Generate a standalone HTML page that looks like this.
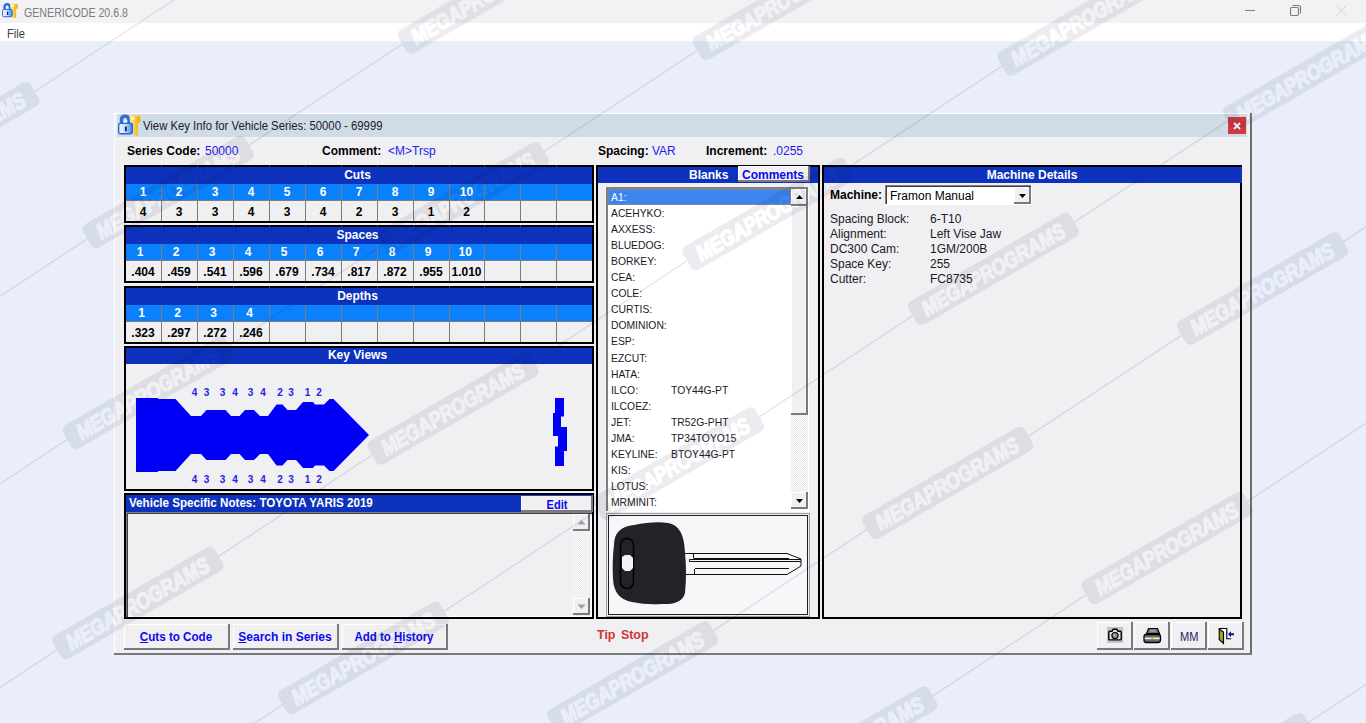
<!DOCTYPE html>
<html><head><meta charset="utf-8"><style>
*{margin:0;padding:0;box-sizing:border-box}
html,body{width:1366px;height:723px;overflow:hidden;background:#e9eefa;font-family:"Liberation Sans",sans-serif;font-size:12px;color:#000;position:relative}
.a{position:absolute}
.t{position:absolute;white-space:nowrap;line-height:1}
svg{position:absolute;overflow:visible}
</style></head><body>
<div class="a" style="left:0px;top:0px;width:1366px;height:23px;background:#f2f1f4"></div>
<div class="a" style="left:0px;top:23px;width:1366px;height:18px;background:#fff"></div>
<div class="a" style="left:0px;top:41px;width:1366px;height:1px;background:#f1f1f4"></div>
<div class="t" style="left:24px;top:6.5px;font-size:12px;color:#7c7c7c;transform-origin:0 0;transform:scaleX(0.886)">GENERICODE 20.6.8</div>
<div class="t" style="left:7px;top:27.5px;font-size:12px;color:#3c3c4e;transform-origin:0 0;transform:scaleX(0.93)">File</div>
<div class="a" style="left:1245px;top:10px;width:10px;height:1px;background:#808080"></div>
<svg style="left:1289px;top:4px" width="13" height="13" viewBox="0 0 13 13"><rect x="1.5" y="3.5" width="8" height="8" rx="1.2" fill="none" stroke="#7a7a7a" stroke-width="1.1"/><path d="M3.5 1.5 H9.5 Q11.5 1.5 11.5 3.5 V9.5" fill="none" stroke="#7a7a7a" stroke-width="1.1"/></svg>
<svg style="left:1336px;top:5px" width="11" height="11" viewBox="0 0 11 11"><path d="M0.5 0.5 L10.5 10.5 M10.5 0.5 L0.5 10.5" stroke="#d0d0d4" stroke-width="1"/></svg>
<svg style="left:0px;top:0px" width="22" height="22" viewBox="0 0 22 22"><g transform="scale(1.0)"><defs><linearGradient id="lg" x1="0" y1="0" x2="1" y2="0"><stop offset="0" stop-color="#f4fbff"/><stop offset="0.5" stop-color="#bfe0ff"/><stop offset="1" stop-color="#3b7fe6"/></linearGradient><linearGradient id="kg" x1="0" y1="0" x2="1" y2="0"><stop offset="0" stop-color="#fff27a"/><stop offset="1" stop-color="#f0a800"/></linearGradient></defs><path d="M4.6 9.6 V6.6 Q4.6 4.3 7.1 4.3 Q9.6 4.3 9.6 6.6 V9.6" fill="none" stroke="#2f6be0" stroke-width="2.4"/><rect x="6.1" y="7.2" width="2.6" height="1.6" fill="#f0f8ff"/><rect x="2.6" y="9.4" width="9.6" height="7.3" rx="1" fill="url(#lg)" stroke="#2d66dc" stroke-width="1"/><rect x="7" y="11.6" width="1.3" height="3.4" fill="#0b1c8c"/><path d="M10.2 4.1 H17.8 V8.3 L16.1 9.3 V17.9 H13 V9.3 L10.6 8.3 Z" fill="url(#kg)"/><rect x="11.2" y="5" width="2.5" height="2" fill="#fffbd0"/></g></svg>
<div class="a" style="left:114px;top:113px;width:1138px;height:542px;background:#f0eff2"></div>
<div class="a" style="left:114px;top:113px;width:1136px;height:1px;background:#fff"></div>
<div class="a" style="left:114px;top:113px;width:1px;height:541px;background:#fff"></div>
<div class="a" style="left:1250px;top:113px;width:2px;height:542px;background:#6e6e72"></div>
<div class="a" style="left:114px;top:653px;width:1138px;height:2px;background:#7a7a7e"></div>
<div class="a" style="left:117px;top:114px;width:1130px;height:23px;background:#d0dbe8"></div>
<svg style="left:115px;top:110px" width="30" height="30" viewBox="0 0 30 30"><g transform="scale(1.42)"><defs><linearGradient id="lg" x1="0" y1="0" x2="1" y2="0"><stop offset="0" stop-color="#f4fbff"/><stop offset="0.5" stop-color="#bfe0ff"/><stop offset="1" stop-color="#3b7fe6"/></linearGradient><linearGradient id="kg" x1="0" y1="0" x2="1" y2="0"><stop offset="0" stop-color="#fff27a"/><stop offset="1" stop-color="#f0a800"/></linearGradient></defs><path d="M4.6 9.6 V6.6 Q4.6 4.3 7.1 4.3 Q9.6 4.3 9.6 6.6 V9.6" fill="none" stroke="#2f6be0" stroke-width="2.4"/><rect x="6.1" y="7.2" width="2.6" height="1.6" fill="#f0f8ff"/><rect x="2.6" y="9.4" width="9.6" height="7.3" rx="1" fill="url(#lg)" stroke="#2d66dc" stroke-width="1"/><rect x="7" y="11.6" width="1.3" height="3.4" fill="#0b1c8c"/><path d="M10.2 4.1 H17.8 V8.3 L16.1 9.3 V17.9 H13 V9.3 L10.6 8.3 Z" fill="url(#kg)"/><rect x="11.2" y="5" width="2.5" height="2" fill="#fffbd0"/></g></svg>
<div class="t" style="left:143px;top:120px;font-size:12px;color:#1a1a2a;transform-origin:0 0;transform:scaleX(0.943)">View Key Info for Vehicle Series: 50000 - 69999</div>
<div class="a" style="left:1228px;top:117px;width:18px;height:17px;background:#cf3a40"></div>
<svg style="left:1233px;top:122px" width="8" height="8" viewBox="0 0 8 8"><path d="M1 1 L7 7 M7 1 L1 7" stroke="#fff" stroke-width="2"/></svg>
<div class="t" style="left:127px;top:145px;font-weight:bold">Series Code:</div>
<div class="t" style="left:205px;top:145px;color:#1c1cf0">50000</div>
<div class="t" style="left:322px;top:145px;font-weight:bold">Comment:</div>
<div class="t" style="left:388px;top:145px;color:#1c1cf0">&lt;M&gt;Trsp</div>
<div class="t" style="left:598px;top:145px;font-weight:bold">Spacing:</div>
<div class="t" style="left:652px;top:145px;color:#1c1cf0">VAR</div>
<div class="t" style="left:706px;top:145px;font-weight:bold">Increment:</div>
<div class="t" style="left:773px;top:145px;color:#1c1cf0">.0255</div>
<div class="a" style="left:124px;top:165px;width:470px;height:58px;background:#000"></div>
<div class="a" style="left:126px;top:167px;width:466px;height:17px;background:#0d32bd"></div>
<div class="a" style="left:126px;top:184px;width:466px;height:16px;background:#0a80fa"></div>
<div class="a" style="left:126px;top:200px;width:466px;height:1px;background:#7c7c80"></div>
<div class="a" style="left:126px;top:201px;width:466px;height:20px;background:#f0eff2"></div>
<div class="a" style="left:161px;top:165px;width:1px;height:2px;background:#3a3a3a"></div>
<div class="a" style="left:161px;top:184px;width:1px;height:37px;background:#7c7c80"></div>
<div class="a" style="left:197px;top:165px;width:1px;height:2px;background:#3a3a3a"></div>
<div class="a" style="left:197px;top:184px;width:1px;height:37px;background:#7c7c80"></div>
<div class="a" style="left:233px;top:165px;width:1px;height:2px;background:#3a3a3a"></div>
<div class="a" style="left:233px;top:184px;width:1px;height:37px;background:#7c7c80"></div>
<div class="a" style="left:269px;top:165px;width:1px;height:2px;background:#3a3a3a"></div>
<div class="a" style="left:269px;top:184px;width:1px;height:37px;background:#7c7c80"></div>
<div class="a" style="left:305px;top:165px;width:1px;height:2px;background:#3a3a3a"></div>
<div class="a" style="left:305px;top:184px;width:1px;height:37px;background:#7c7c80"></div>
<div class="a" style="left:341px;top:165px;width:1px;height:2px;background:#3a3a3a"></div>
<div class="a" style="left:341px;top:184px;width:1px;height:37px;background:#7c7c80"></div>
<div class="a" style="left:377px;top:165px;width:1px;height:2px;background:#3a3a3a"></div>
<div class="a" style="left:377px;top:184px;width:1px;height:37px;background:#7c7c80"></div>
<div class="a" style="left:413px;top:165px;width:1px;height:2px;background:#3a3a3a"></div>
<div class="a" style="left:413px;top:184px;width:1px;height:37px;background:#7c7c80"></div>
<div class="a" style="left:449px;top:165px;width:1px;height:2px;background:#3a3a3a"></div>
<div class="a" style="left:449px;top:184px;width:1px;height:37px;background:#7c7c80"></div>
<div class="a" style="left:484px;top:165px;width:1px;height:2px;background:#3a3a3a"></div>
<div class="a" style="left:484px;top:184px;width:1px;height:37px;background:#7c7c80"></div>
<div class="a" style="left:520px;top:165px;width:1px;height:2px;background:#3a3a3a"></div>
<div class="a" style="left:520px;top:184px;width:1px;height:37px;background:#7c7c80"></div>
<div class="a" style="left:556px;top:165px;width:1px;height:2px;background:#3a3a3a"></div>
<div class="a" style="left:556px;top:184px;width:1px;height:37px;background:#7c7c80"></div>
<div class="t" style="left:297.5px;top:169px;width:120px;text-align:center;color:#fff;font-weight:bold">Cuts</div>
<div class="t" style="left:123.0px;top:186px;width:40px;text-align:center;color:#fff;font-weight:bold">1</div>
<div class="t" style="left:159.0px;top:186px;width:40px;text-align:center;color:#fff;font-weight:bold">2</div>
<div class="t" style="left:195.0px;top:186px;width:40px;text-align:center;color:#fff;font-weight:bold">3</div>
<div class="t" style="left:231.0px;top:186px;width:40px;text-align:center;color:#fff;font-weight:bold">4</div>
<div class="t" style="left:267.0px;top:186px;width:40px;text-align:center;color:#fff;font-weight:bold">5</div>
<div class="t" style="left:303.0px;top:186px;width:40px;text-align:center;color:#fff;font-weight:bold">6</div>
<div class="t" style="left:339.0px;top:186px;width:40px;text-align:center;color:#fff;font-weight:bold">7</div>
<div class="t" style="left:375.0px;top:186px;width:40px;text-align:center;color:#fff;font-weight:bold">8</div>
<div class="t" style="left:411.0px;top:186px;width:40px;text-align:center;color:#fff;font-weight:bold">9</div>
<div class="t" style="left:446.5px;top:186px;width:40px;text-align:center;color:#fff;font-weight:bold">10</div>
<div class="t" style="left:123.0px;top:206px;width:40px;text-align:center;font-weight:bold">4</div>
<div class="t" style="left:159.0px;top:206px;width:40px;text-align:center;font-weight:bold">3</div>
<div class="t" style="left:195.0px;top:206px;width:40px;text-align:center;font-weight:bold">3</div>
<div class="t" style="left:231.0px;top:206px;width:40px;text-align:center;font-weight:bold">4</div>
<div class="t" style="left:267.0px;top:206px;width:40px;text-align:center;font-weight:bold">3</div>
<div class="t" style="left:303.0px;top:206px;width:40px;text-align:center;font-weight:bold">4</div>
<div class="t" style="left:339.0px;top:206px;width:40px;text-align:center;font-weight:bold">2</div>
<div class="t" style="left:375.0px;top:206px;width:40px;text-align:center;font-weight:bold">3</div>
<div class="t" style="left:411.0px;top:206px;width:40px;text-align:center;font-weight:bold">1</div>
<div class="t" style="left:446.5px;top:206px;width:40px;text-align:center;font-weight:bold">2</div>
<div class="a" style="left:124px;top:225px;width:470px;height:58px;background:#000"></div>
<div class="a" style="left:126px;top:227px;width:466px;height:17px;background:#0d32bd"></div>
<div class="a" style="left:126px;top:244px;width:466px;height:16px;background:#0a80fa"></div>
<div class="a" style="left:126px;top:260px;width:466px;height:1px;background:#7c7c80"></div>
<div class="a" style="left:126px;top:261px;width:466px;height:20px;background:#f0eff2"></div>
<div class="a" style="left:161px;top:225px;width:1px;height:2px;background:#3a3a3a"></div>
<div class="a" style="left:161px;top:244px;width:1px;height:37px;background:#7c7c80"></div>
<div class="a" style="left:197px;top:225px;width:1px;height:2px;background:#3a3a3a"></div>
<div class="a" style="left:197px;top:244px;width:1px;height:37px;background:#7c7c80"></div>
<div class="a" style="left:233px;top:225px;width:1px;height:2px;background:#3a3a3a"></div>
<div class="a" style="left:233px;top:244px;width:1px;height:37px;background:#7c7c80"></div>
<div class="a" style="left:269px;top:225px;width:1px;height:2px;background:#3a3a3a"></div>
<div class="a" style="left:269px;top:244px;width:1px;height:37px;background:#7c7c80"></div>
<div class="a" style="left:305px;top:225px;width:1px;height:2px;background:#3a3a3a"></div>
<div class="a" style="left:305px;top:244px;width:1px;height:37px;background:#7c7c80"></div>
<div class="a" style="left:341px;top:225px;width:1px;height:2px;background:#3a3a3a"></div>
<div class="a" style="left:341px;top:244px;width:1px;height:37px;background:#7c7c80"></div>
<div class="a" style="left:377px;top:225px;width:1px;height:2px;background:#3a3a3a"></div>
<div class="a" style="left:377px;top:244px;width:1px;height:37px;background:#7c7c80"></div>
<div class="a" style="left:413px;top:225px;width:1px;height:2px;background:#3a3a3a"></div>
<div class="a" style="left:413px;top:244px;width:1px;height:37px;background:#7c7c80"></div>
<div class="a" style="left:449px;top:225px;width:1px;height:2px;background:#3a3a3a"></div>
<div class="a" style="left:449px;top:244px;width:1px;height:37px;background:#7c7c80"></div>
<div class="a" style="left:484px;top:225px;width:1px;height:2px;background:#3a3a3a"></div>
<div class="a" style="left:484px;top:244px;width:1px;height:37px;background:#7c7c80"></div>
<div class="a" style="left:520px;top:225px;width:1px;height:2px;background:#3a3a3a"></div>
<div class="a" style="left:520px;top:244px;width:1px;height:37px;background:#7c7c80"></div>
<div class="a" style="left:556px;top:225px;width:1px;height:2px;background:#3a3a3a"></div>
<div class="a" style="left:556px;top:244px;width:1px;height:37px;background:#7c7c80"></div>
<div class="t" style="left:297.5px;top:229px;width:120px;text-align:center;color:#fff;font-weight:bold">Spaces</div>
<div class="t" style="left:120.0px;top:246px;width:40px;text-align:center;color:#fff;font-weight:bold">1</div>
<div class="t" style="left:156.0px;top:246px;width:40px;text-align:center;color:#fff;font-weight:bold">2</div>
<div class="t" style="left:192.0px;top:246px;width:40px;text-align:center;color:#fff;font-weight:bold">3</div>
<div class="t" style="left:228.0px;top:246px;width:40px;text-align:center;color:#fff;font-weight:bold">4</div>
<div class="t" style="left:264.0px;top:246px;width:40px;text-align:center;color:#fff;font-weight:bold">5</div>
<div class="t" style="left:300.0px;top:246px;width:40px;text-align:center;color:#fff;font-weight:bold">6</div>
<div class="t" style="left:336.0px;top:246px;width:40px;text-align:center;color:#fff;font-weight:bold">7</div>
<div class="t" style="left:372.0px;top:246px;width:40px;text-align:center;color:#fff;font-weight:bold">8</div>
<div class="t" style="left:408.0px;top:246px;width:40px;text-align:center;color:#fff;font-weight:bold">9</div>
<div class="t" style="left:445.3px;top:246px;width:40px;text-align:center;color:#fff;font-weight:bold">10</div>
<div class="t" style="left:123.0px;top:266px;width:40px;text-align:center;font-weight:bold">.404</div>
<div class="t" style="left:159.0px;top:266px;width:40px;text-align:center;font-weight:bold">.459</div>
<div class="t" style="left:195.0px;top:266px;width:40px;text-align:center;font-weight:bold">.541</div>
<div class="t" style="left:231.0px;top:266px;width:40px;text-align:center;font-weight:bold">.596</div>
<div class="t" style="left:267.0px;top:266px;width:40px;text-align:center;font-weight:bold">.679</div>
<div class="t" style="left:303.0px;top:266px;width:40px;text-align:center;font-weight:bold">.734</div>
<div class="t" style="left:339.0px;top:266px;width:40px;text-align:center;font-weight:bold">.817</div>
<div class="t" style="left:375.0px;top:266px;width:40px;text-align:center;font-weight:bold">.872</div>
<div class="t" style="left:411.0px;top:266px;width:40px;text-align:center;font-weight:bold">.955</div>
<div class="t" style="left:446.5px;top:266px;width:40px;text-align:center;font-weight:bold">1.010</div>
<div class="a" style="left:124px;top:286px;width:470px;height:58px;background:#000"></div>
<div class="a" style="left:126px;top:288px;width:466px;height:17px;background:#0d32bd"></div>
<div class="a" style="left:126px;top:305px;width:466px;height:16px;background:#0a80fa"></div>
<div class="a" style="left:126px;top:321px;width:466px;height:1px;background:#7c7c80"></div>
<div class="a" style="left:126px;top:322px;width:466px;height:20px;background:#f0eff2"></div>
<div class="a" style="left:161px;top:286px;width:1px;height:2px;background:#3a3a3a"></div>
<div class="a" style="left:161px;top:305px;width:1px;height:37px;background:#7c7c80"></div>
<div class="a" style="left:197px;top:286px;width:1px;height:2px;background:#3a3a3a"></div>
<div class="a" style="left:197px;top:305px;width:1px;height:37px;background:#7c7c80"></div>
<div class="a" style="left:233px;top:286px;width:1px;height:2px;background:#3a3a3a"></div>
<div class="a" style="left:233px;top:305px;width:1px;height:37px;background:#7c7c80"></div>
<div class="a" style="left:269px;top:286px;width:1px;height:2px;background:#3a3a3a"></div>
<div class="a" style="left:269px;top:305px;width:1px;height:37px;background:#7c7c80"></div>
<div class="a" style="left:305px;top:286px;width:1px;height:2px;background:#3a3a3a"></div>
<div class="a" style="left:305px;top:305px;width:1px;height:37px;background:#7c7c80"></div>
<div class="a" style="left:341px;top:286px;width:1px;height:2px;background:#3a3a3a"></div>
<div class="a" style="left:341px;top:305px;width:1px;height:37px;background:#7c7c80"></div>
<div class="a" style="left:377px;top:286px;width:1px;height:2px;background:#3a3a3a"></div>
<div class="a" style="left:377px;top:305px;width:1px;height:37px;background:#7c7c80"></div>
<div class="a" style="left:413px;top:286px;width:1px;height:2px;background:#3a3a3a"></div>
<div class="a" style="left:413px;top:305px;width:1px;height:37px;background:#7c7c80"></div>
<div class="a" style="left:449px;top:286px;width:1px;height:2px;background:#3a3a3a"></div>
<div class="a" style="left:449px;top:305px;width:1px;height:37px;background:#7c7c80"></div>
<div class="a" style="left:484px;top:286px;width:1px;height:2px;background:#3a3a3a"></div>
<div class="a" style="left:484px;top:305px;width:1px;height:37px;background:#7c7c80"></div>
<div class="a" style="left:520px;top:286px;width:1px;height:2px;background:#3a3a3a"></div>
<div class="a" style="left:520px;top:305px;width:1px;height:37px;background:#7c7c80"></div>
<div class="a" style="left:556px;top:286px;width:1px;height:2px;background:#3a3a3a"></div>
<div class="a" style="left:556px;top:305px;width:1px;height:37px;background:#7c7c80"></div>
<div class="t" style="left:297.5px;top:290px;width:120px;text-align:center;color:#fff;font-weight:bold">Depths</div>
<div class="t" style="left:121.5px;top:307px;width:40px;text-align:center;color:#fff;font-weight:bold">1</div>
<div class="t" style="left:157.5px;top:307px;width:40px;text-align:center;color:#fff;font-weight:bold">2</div>
<div class="t" style="left:193.5px;top:307px;width:40px;text-align:center;color:#fff;font-weight:bold">3</div>
<div class="t" style="left:229.5px;top:307px;width:40px;text-align:center;color:#fff;font-weight:bold">4</div>
<div class="t" style="left:123.0px;top:327px;width:40px;text-align:center;font-weight:bold">.323</div>
<div class="t" style="left:159.0px;top:327px;width:40px;text-align:center;font-weight:bold">.297</div>
<div class="t" style="left:195.0px;top:327px;width:40px;text-align:center;font-weight:bold">.272</div>
<div class="t" style="left:231.0px;top:327px;width:40px;text-align:center;font-weight:bold">.246</div>
<div class="a" style="left:124px;top:346px;width:470px;height:145px;background:#000"></div>
<div class="a" style="left:126px;top:348px;width:466px;height:16px;background:#0d32bd"></div>
<div class="a" style="left:126px;top:364px;width:466px;height:125px;background:#f0eff2"></div>
<div class="t" style="left:297.5px;top:349px;width:120px;text-align:center;color:#fff;font-weight:bold">Key Views</div>
<svg style="left:0px;top:0px" width="600" height="500" viewBox="0 0 600 500"><polygon fill="#0000f8" points="136,398 158,398 158,399 175.5,399 191,416 201,416 206.5,410 225.5,410 231,416 239.5,416 245,410 254,410 260,416 268,416 276.5,404.5 282.5,404.5 287.5,410 296,410 303,402 313,402 315,404.5 324,404.5 329.5,399 333.5,399 369,435 333.5,471 329.5,471 324,465.5 315,465.5 313,468 303,468 296,460 287.5,460 282.5,465.5 276.5,465.5 268,454 260,454 254,460 245,460 239.5,454 231,454 225.5,460 206.5,460 201,454 191,454 175.5,471 158,471 158,472 136,472"/><polygon fill="#0000f8" points="555,398 564,398 564,416.5 561,416.5 561,427 567,427 567,451 564,451 564,466 555,466 555,446.5 558,446.5 558,436 553,436 553,413 555,413"/></svg>
<div class="t" style="left:187.5px;top:388px;width:14px;text-align:center;color:#2424e0;font-weight:bold;font-size:10px">4</div>
<div class="t" style="left:187.5px;top:474.5px;width:14px;text-align:center;color:#2424e0;font-weight:bold;font-size:10px">4</div>
<div class="t" style="left:199.5px;top:388px;width:14px;text-align:center;color:#2424e0;font-weight:bold;font-size:10px">3</div>
<div class="t" style="left:199.5px;top:474.5px;width:14px;text-align:center;color:#2424e0;font-weight:bold;font-size:10px">3</div>
<div class="t" style="left:215.5px;top:388px;width:14px;text-align:center;color:#2424e0;font-weight:bold;font-size:10px">3</div>
<div class="t" style="left:215.5px;top:474.5px;width:14px;text-align:center;color:#2424e0;font-weight:bold;font-size:10px">3</div>
<div class="t" style="left:228.0px;top:388px;width:14px;text-align:center;color:#2424e0;font-weight:bold;font-size:10px">4</div>
<div class="t" style="left:228.0px;top:474.5px;width:14px;text-align:center;color:#2424e0;font-weight:bold;font-size:10px">4</div>
<div class="t" style="left:243.5px;top:388px;width:14px;text-align:center;color:#2424e0;font-weight:bold;font-size:10px">3</div>
<div class="t" style="left:243.5px;top:474.5px;width:14px;text-align:center;color:#2424e0;font-weight:bold;font-size:10px">3</div>
<div class="t" style="left:256.0px;top:388px;width:14px;text-align:center;color:#2424e0;font-weight:bold;font-size:10px">4</div>
<div class="t" style="left:256.0px;top:474.5px;width:14px;text-align:center;color:#2424e0;font-weight:bold;font-size:10px">4</div>
<div class="t" style="left:273.0px;top:388px;width:14px;text-align:center;color:#2424e0;font-weight:bold;font-size:10px">2</div>
<div class="t" style="left:273.0px;top:474.5px;width:14px;text-align:center;color:#2424e0;font-weight:bold;font-size:10px">2</div>
<div class="t" style="left:284.0px;top:388px;width:14px;text-align:center;color:#2424e0;font-weight:bold;font-size:10px">3</div>
<div class="t" style="left:284.0px;top:474.5px;width:14px;text-align:center;color:#2424e0;font-weight:bold;font-size:10px">3</div>
<div class="t" style="left:300.5px;top:388px;width:14px;text-align:center;color:#2424e0;font-weight:bold;font-size:10px">1</div>
<div class="t" style="left:300.5px;top:474.5px;width:14px;text-align:center;color:#2424e0;font-weight:bold;font-size:10px">1</div>
<div class="t" style="left:312.0px;top:388px;width:14px;text-align:center;color:#2424e0;font-weight:bold;font-size:10px">2</div>
<div class="t" style="left:312.0px;top:474.5px;width:14px;text-align:center;color:#2424e0;font-weight:bold;font-size:10px">2</div>
<div class="a" style="left:124px;top:493px;width:470px;height:126px;background:#000"></div>
<div class="a" style="left:126px;top:495px;width:466px;height:17px;background:#0d32bd"></div>
<div class="a" style="left:126px;top:512px;width:466px;height:105px;background:#f0eff2"></div>
<div class="t" style="left:129px;top:497px;color:#fff;font-weight:bold;transform-origin:0 0;transform:scaleX(0.968)">Vehicle Specific Notes: TOYOTA YARIS 2019</div>
<div class="a" style="left:521px;top:495px;width:72px;height:17px;background:#7a7a7e"></div>
<div class="a" style="left:521px;top:495px;width:70px;height:15px;background:#ffffff"></div>
<div class="a" style="left:522px;top:496px;width:69px;height:14px;background:#f0eff2"></div>
<div class="a" style="left:521px;top:495px;width:71px;height:1px;background:#1c44d8"></div>
<div class="t" style="left:537.0px;top:499px;width:40px;text-align:center;color:#0a0af0;font-weight:bold;transform:scaleX(0.92)">Edit</div>
<div class="a" style="left:126px;top:512px;width:466px;height:105px;background:#808084"></div>
<div class="a" style="left:127px;top:513px;width:465px;height:104px;background:#404040"></div>
<div class="a" style="left:128px;top:514px;width:464px;height:103px;background:#fff"></div>
<div class="a" style="left:128px;top:514px;width:463px;height:102px;background:#f0eff2"></div>
<div class="a" style="left:573px;top:514px;width:17px;height:102px;background:repeating-conic-gradient(#fbfbfc 0 25%,#e9e8ec 0 50%) 0 0/2px 2px"></div>
<div class="a" style="left:573px;top:514px;width:17px;height:17px;background:#7a7a7e"></div>
<div class="a" style="left:573px;top:514px;width:15px;height:15px;background:#ffffff"></div>
<div class="a" style="left:574px;top:515px;width:14px;height:14px;background:#f0eff2"></div>
<svg style="left:573px;top:514px" width="17" height="17" viewBox="0 0 17 17"><path d="M4.5 10.5 L8.5 6 L12.5 10.5 Z" fill="#a0a0a4"/></svg>
<div class="a" style="left:573px;top:598px;width:17px;height:17px;background:#7a7a7e"></div>
<div class="a" style="left:573px;top:598px;width:15px;height:15px;background:#ffffff"></div>
<div class="a" style="left:574px;top:599px;width:14px;height:14px;background:#f0eff2"></div>
<svg style="left:573px;top:598px" width="17" height="17" viewBox="0 0 17 17"><path d="M4.5 6.5 L8.5 11 L12.5 6.5 Z" fill="#a0a0a4"/></svg>
<div class="a" style="left:596px;top:165px;width:224px;height:454px;background:#000"></div>
<div class="a" style="left:598px;top:167px;width:220px;height:16px;background:#0d32bd"></div>
<div class="a" style="left:598px;top:183px;width:220px;height:434px;background:#f0eff2"></div>
<div class="t" style="left:689px;top:169px;color:#fff;font-weight:bold">Blanks</div>
<div class="a" style="left:738px;top:166px;width:72px;height:16px;background:#7a7a7e"></div>
<div class="a" style="left:738px;top:166px;width:70px;height:14px;background:#ffffff"></div>
<div class="a" style="left:739px;top:167px;width:69px;height:13px;background:#f0eff2"></div>
<div class="t" style="left:742px;top:169px;color:#0a0af0;font-weight:bold">Comments</div>
<div class="a" style="left:606px;top:187px;width:203px;height:325px;background:#fff"></div>
<div class="a" style="left:606px;top:187px;width:202px;height:2px;background:#808084"></div>
<div class="a" style="left:606px;top:187px;width:2px;height:324px;background:#808084"></div>
<div class="a" style="left:608px;top:189px;width:183px;height:16px;background:#3d85ee"></div>
<div class="a" style="left:608px;top:189px;width:183px;height:16px;border:1px dotted #c88a30"></div>
<div class="t" style="left:611px;top:191.5px;font-size:11px;color:#fff;transform-origin:0 0;transform:scaleX(0.94)">A1:</div>
<div class="t" style="left:611px;top:207.6px;font-size:11px;color:#1a1a28;transform-origin:0 0;transform:scaleX(0.94)">ACEHYKO:</div>
<div class="t" style="left:611px;top:223.7px;font-size:11px;color:#1a1a28;transform-origin:0 0;transform:scaleX(0.94)">AXXESS:</div>
<div class="t" style="left:611px;top:239.8px;font-size:11px;color:#1a1a28;transform-origin:0 0;transform:scaleX(0.94)">BLUEDOG:</div>
<div class="t" style="left:611px;top:255.9px;font-size:11px;color:#1a1a28;transform-origin:0 0;transform:scaleX(0.94)">BORKEY:</div>
<div class="t" style="left:611px;top:272.0px;font-size:11px;color:#1a1a28;transform-origin:0 0;transform:scaleX(0.94)">CEA:</div>
<div class="t" style="left:611px;top:288.1px;font-size:11px;color:#1a1a28;transform-origin:0 0;transform:scaleX(0.94)">COLE:</div>
<div class="t" style="left:611px;top:304.20000000000005px;font-size:11px;color:#1a1a28;transform-origin:0 0;transform:scaleX(0.94)">CURTIS:</div>
<div class="t" style="left:611px;top:320.3px;font-size:11px;color:#1a1a28;transform-origin:0 0;transform:scaleX(0.94)">DOMINION:</div>
<div class="t" style="left:611px;top:336.4px;font-size:11px;color:#1a1a28;transform-origin:0 0;transform:scaleX(0.94)">ESP:</div>
<div class="t" style="left:611px;top:352.5px;font-size:11px;color:#1a1a28;transform-origin:0 0;transform:scaleX(0.94)">EZCUT:</div>
<div class="t" style="left:611px;top:368.6px;font-size:11px;color:#1a1a28;transform-origin:0 0;transform:scaleX(0.94)">HATA:</div>
<div class="t" style="left:611px;top:384.70000000000005px;font-size:11px;color:#1a1a28;transform-origin:0 0;transform:scaleX(0.94)">ILCO:</div>
<div class="t" style="left:671px;top:384.70000000000005px;font-size:11px;color:#1a1a28;transform-origin:0 0;transform:scaleX(0.94)">TOY44G-PT</div>
<div class="t" style="left:611px;top:400.8px;font-size:11px;color:#1a1a28;transform-origin:0 0;transform:scaleX(0.94)">ILCOEZ:</div>
<div class="t" style="left:611px;top:416.90000000000003px;font-size:11px;color:#1a1a28;transform-origin:0 0;transform:scaleX(0.94)">JET:</div>
<div class="t" style="left:671px;top:416.90000000000003px;font-size:11px;color:#1a1a28;transform-origin:0 0;transform:scaleX(0.94)">TR52G-PHT</div>
<div class="t" style="left:611px;top:433.0px;font-size:11px;color:#1a1a28;transform-origin:0 0;transform:scaleX(0.94)">JMA:</div>
<div class="t" style="left:671px;top:433.0px;font-size:11px;color:#1a1a28;transform-origin:0 0;transform:scaleX(0.94)">TP34TOYO15</div>
<div class="t" style="left:611px;top:449.1px;font-size:11px;color:#1a1a28;transform-origin:0 0;transform:scaleX(0.94)">KEYLINE:</div>
<div class="t" style="left:671px;top:449.1px;font-size:11px;color:#1a1a28;transform-origin:0 0;transform:scaleX(0.94)">BTOY44G-PT</div>
<div class="t" style="left:611px;top:465.20000000000005px;font-size:11px;color:#1a1a28;transform-origin:0 0;transform:scaleX(0.94)">KIS:</div>
<div class="t" style="left:611px;top:481.3px;font-size:11px;color:#1a1a28;transform-origin:0 0;transform:scaleX(0.94)">LOTUS:</div>
<div class="t" style="left:611px;top:497.40000000000003px;font-size:11px;color:#1a1a28;transform-origin:0 0;transform:scaleX(0.94)">MRMINIT:</div>
<div class="a" style="left:791px;top:189px;width:17px;height:320px;background:repeating-conic-gradient(#fbfbfc 0 25%,#e9e8ec 0 50%) 0 0/2px 2px"></div>
<div class="a" style="left:791px;top:189px;width:17px;height:17px;background:#7a7a7e"></div>
<div class="a" style="left:791px;top:189px;width:15px;height:15px;background:#ffffff"></div>
<div class="a" style="left:792px;top:190px;width:14px;height:14px;background:#f0eff2"></div>
<svg style="left:791px;top:189px" width="17" height="17" viewBox="0 0 17 17"><path d="M5 10 L8.5 6 L12 10 Z" fill="#000"/></svg>
<div class="a" style="left:791px;top:206px;width:17px;height:209px;background:#7a7a7e"></div>
<div class="a" style="left:791px;top:206px;width:15px;height:207px;background:#ffffff"></div>
<div class="a" style="left:792px;top:207px;width:14px;height:206px;background:#f0eff2"></div>
<div class="a" style="left:791px;top:492px;width:17px;height:17px;background:#7a7a7e"></div>
<div class="a" style="left:791px;top:492px;width:15px;height:15px;background:#ffffff"></div>
<div class="a" style="left:792px;top:493px;width:14px;height:14px;background:#f0eff2"></div>
<svg style="left:791px;top:492px" width="17" height="17" viewBox="0 0 17 17"><path d="M5 7 L8.5 11 L12 7 Z" fill="#000"/></svg>
<div class="a" style="left:606px;top:513px;width:204px;height:104px;background:#a0a0a4"></div>
<div class="a" style="left:607px;top:514px;width:202px;height:102px;background:#f0eff2"></div>
<div class="a" style="left:608px;top:515px;width:200px;height:100px;background:#202020"></div>
<div class="a" style="left:609px;top:516px;width:198px;height:98px;background:#f7f6f9"></div>
<svg style="left:606px;top:513px" width="204" height="104" viewBox="0 0 204 104"><path d="M8 32 Q8 14 28 12 Q48 8 62 10 Q78 12 79 40 Q81 60 79 80 Q76 92 56 91 Q40 92 26 89 Q8 86 7 66 Q6 48 8 32 Z" fill="#222227"/><rect x="14.5" y="25.5" width="13" height="50" rx="6.5" fill="none" stroke="#000" stroke-width="1.5"/><path d="M16 44 L19 42 L24 42 L27 45 L27 55 L24 58 L19 58 L16 55 Z" fill="#f2f2f4"/><g fill="none" stroke="#111" stroke-width="1"><path d="M79 40.5 H181 L195 46 L195 53 L181 61.5 H79"/><path d="M87.5 45.5 H183"/><path d="M83.5 46.5 H195 M83.5 46.5 V48.5 H195"/><path d="M89 55.5 H183"/><path d="M87.5 40.5 V45"/><path d="M88.5 56 V61"/></g></svg>
<div class="a" style="left:822px;top:165px;width:420px;height:454px;background:#000"></div>
<div class="a" style="left:824px;top:167px;width:418px;height:16px;background:#0d32bd"></div>
<div class="a" style="left:824px;top:183px;width:416px;height:434px;background:#f0eff2"></div>
<div class="t" style="left:952.0px;top:168.5px;width:160px;text-align:center;color:#fff;font-weight:bold">Machine Details</div>
<div class="t" style="left:830px;top:189px;font-weight:bold">Machine:</div>
<div class="a" style="left:885px;top:185px;width:147px;height:20px;background:#fff"></div>
<div class="a" style="left:885px;top:185px;width:146px;height:1px;background:#808084"></div>
<div class="a" style="left:885px;top:185px;width:1px;height:19px;background:#808084"></div>
<div class="a" style="left:886px;top:186px;width:145px;height:1px;background:#404040"></div>
<div class="a" style="left:886px;top:186px;width:1px;height:18px;background:#404040"></div>
<div class="t" style="left:890px;top:190px;font-size:12px;color:#000">Framon Manual</div>
<div class="a" style="left:1014px;top:187px;width:17px;height:17px;background:#7a7a7e"></div>
<div class="a" style="left:1014px;top:187px;width:15px;height:15px;background:#ffffff"></div>
<div class="a" style="left:1015px;top:188px;width:14px;height:14px;background:#f0eff2"></div>
<svg style="left:1014px;top:187px" width="17" height="17" viewBox="0 0 17 17"><path d="M5 7 L8.5 11 L12 7 Z" fill="#000"/></svg>
<div class="t" style="left:830px;top:213px;color:#1a1a28">Spacing Block:</div>
<div class="t" style="left:930px;top:213px;color:#1a1a28">6-T10</div>
<div class="t" style="left:830px;top:228px;color:#1a1a28">Alignment:</div>
<div class="t" style="left:930px;top:228px;color:#1a1a28">Left Vise Jaw</div>
<div class="t" style="left:830px;top:243px;color:#1a1a28">DC300 Cam:</div>
<div class="t" style="left:930px;top:243px;color:#1a1a28">1GM/200B</div>
<div class="t" style="left:830px;top:258px;color:#1a1a28">Space Key:</div>
<div class="t" style="left:930px;top:258px;color:#1a1a28">255</div>
<div class="t" style="left:830px;top:273px;color:#1a1a28">Cutter:</div>
<div class="t" style="left:930px;top:273px;color:#1a1a28">FC8735</div>
<div class="a" style="left:124px;top:624px;width:106px;height:26px;background:#7a7a7e"></div>
<div class="a" style="left:124px;top:624px;width:104px;height:24px;background:#ffffff"></div>
<div class="a" style="left:125px;top:625px;width:103px;height:23px;background:#f0eff2"></div>
<div class="t" style="left:124px;top:631px;width:104px;text-align:center;color:#0a0af0;font-weight:bold;transform:scaleX(0.97)"><u>C</u>uts to Code</div>
<div class="a" style="left:233px;top:624px;width:106px;height:26px;background:#7a7a7e"></div>
<div class="a" style="left:233px;top:624px;width:104px;height:24px;background:#ffffff"></div>
<div class="a" style="left:234px;top:625px;width:103px;height:23px;background:#f0eff2"></div>
<div class="t" style="left:233px;top:631px;width:104px;text-align:center;color:#0a0af0;font-weight:bold;transform:scaleX(1.0)"><u>S</u>earch in Series</div>
<div class="a" style="left:342px;top:624px;width:106px;height:26px;background:#7a7a7e"></div>
<div class="a" style="left:342px;top:624px;width:104px;height:24px;background:#ffffff"></div>
<div class="a" style="left:343px;top:625px;width:103px;height:23px;background:#f0eff2"></div>
<div class="t" style="left:342px;top:631px;width:104px;text-align:center;color:#0a0af0;font-weight:bold;transform:scaleX(0.955)">Add to <u>H</u>istory</div>
<div class="t" style="left:597px;top:628px;color:#cf3636;font-weight:bold;font-size:13px;word-spacing:2px;transform-origin:0 0;transform:scaleX(0.96)">Tip Stop</div>
<div class="a" style="left:1097px;top:622px;width:36px;height:28px;background:#7a7a7e"></div>
<div class="a" style="left:1097px;top:622px;width:34px;height:26px;background:#ffffff"></div>
<div class="a" style="left:1098px;top:623px;width:33px;height:25px;background:#f0eff2"></div>
<div class="a" style="left:1134px;top:622px;width:36px;height:28px;background:#7a7a7e"></div>
<div class="a" style="left:1134px;top:622px;width:34px;height:26px;background:#ffffff"></div>
<div class="a" style="left:1135px;top:623px;width:33px;height:25px;background:#f0eff2"></div>
<div class="a" style="left:1171px;top:622px;width:36px;height:28px;background:#7a7a7e"></div>
<div class="a" style="left:1171px;top:622px;width:34px;height:26px;background:#ffffff"></div>
<div class="a" style="left:1172px;top:623px;width:33px;height:25px;background:#f0eff2"></div>
<div class="a" style="left:1208px;top:622px;width:36px;height:28px;background:#7a7a7e"></div>
<div class="a" style="left:1208px;top:622px;width:34px;height:26px;background:#ffffff"></div>
<div class="a" style="left:1209px;top:623px;width:33px;height:25px;background:#f0eff2"></div>
<div class="t" style="left:1179.5px;top:631px;color:#1c1c5c;font-size:12px;transform-origin:0 0;transform:scaleX(0.92)">MM</div>
<div class="a" style="left:1107px;top:627px;width:16px;height:16px;background:#c4c4c6"></div>
<svg style="left:1107px;top:627px" width="16" height="16" viewBox="0 0 16 16"><path d="M1.8 5 Q1.8 4.2 2.8 4.2 H5 L6.2 2.2 H9.8 L11 4.2 H13.2 Q14.2 4.2 14.2 5 V12 Q14.2 12.9 13.2 12.9 H2.8 Q1.8 12.9 1.8 12 Z" fill="#e2e2e2" stroke="#000" stroke-width="1.4"/><circle cx="8" cy="8.6" r="3.1" fill="#8c8c8c" stroke="#000" stroke-width="1.2"/><circle cx="7.3" cy="7.9" r="1" fill="#c8c8c8"/></svg>
<svg style="left:1143px;top:627px" width="19" height="17" viewBox="0 0 19 17"><path d="M5.5 1.5 H14.5 L16.5 6.5 H3.5 Z" fill="#6e6e6e" stroke="#000" stroke-width="1.1"/><path d="M7 2.5 H13 L12.5 5 H7.5 Z" fill="#9a9a9a"/><path d="M2.5 7.5 Q1 7.5 1 10 V13 Q1 15.5 3 15.5 H15 Q17.5 15.5 17.5 13 V10 Q17.5 7.5 16 7.5 Z" fill="#6a6a6a" stroke="#000" stroke-width="1.3"/><rect x="1.8" y="10.6" width="14.8" height="1.6" fill="#f4f4f4"/><rect x="8" y="10.6" width="3" height="1.6" fill="#c8c000"/></svg>
<svg style="left:1217px;top:627px" width="20" height="18" viewBox="0 0 20 18"><path d="M2.2 1.5 H9.8 V11.8 H14" fill="#fff" stroke="#000" stroke-width="1.1"/><path d="M2.2 2 L6.5 5 V16.5 L2.2 12.5 Z" fill="#a8a024" stroke="#000" stroke-width="1.1"/><path d="M11 7.2 L14 4.3 V6.2 H17 V8.2 H14 V10.1 Z" fill="#0c0ca8"/></svg>
<svg style="left:0;top:0;pointer-events:none;mix-blend-mode:multiply" width="1366" height="723" viewBox="0 0 1366 723"><line x1="-1072.0" y1="768.5" x2="-127.0" y2="185.0" stroke="rgb(230,230,235)" stroke-width="1.4"/><line x1="34.9" y1="91.5" x2="188.0" y2="-9.5" stroke="rgb(230,230,235)" stroke-width="1.4"/><line x1="349.9" y1="-103.0" x2="1294.9" y2="-686.5" stroke="rgb(230,230,235)" stroke-width="1.4"/><g transform="translate(-127.0,185.0) rotate(-30)"><rect x="0" y="-13.5" width="187" height="27" rx="6" fill="rgb(236,236,240)"/><text x="12" y="8" font-family="Liberation Sans" font-weight="bold" font-style="italic" font-size="22" fill="#fff" stroke="#fff" stroke-width="1.6" textLength="162" lengthAdjust="spacingAndGlyphs">MEGAPROGRAMS</text></g><g transform="translate(188.0,-9.5) rotate(-30)"><rect x="0" y="-13.5" width="187" height="27" rx="6" fill="rgb(236,236,240)"/><text x="12" y="8" font-family="Liberation Sans" font-weight="bold" font-style="italic" font-size="22" fill="#fff" stroke="#fff" stroke-width="1.6" textLength="162" lengthAdjust="spacingAndGlyphs">MEGAPROGRAMS</text></g><line x1="-1172.8" y1="1016.8" x2="-227.8" y2="433.2" stroke="rgb(230,230,235)" stroke-width="1.4"/><line x1="-65.8" y1="339.8" x2="87.2" y2="238.8" stroke="rgb(230,230,235)" stroke-width="1.4"/><line x1="249.2" y1="145.2" x2="402.2" y2="44.2" stroke="rgb(230,230,235)" stroke-width="1.4"/><line x1="564.2" y1="-49.2" x2="717.2" y2="-150.2" stroke="rgb(230,230,235)" stroke-width="1.4"/><line x1="879.2" y1="-243.8" x2="1824.2" y2="-827.2" stroke="rgb(230,230,235)" stroke-width="1.4"/><g transform="translate(-227.8,433.2) rotate(-30)"><rect x="0" y="-13.5" width="187" height="27" rx="6" fill="rgb(236,236,240)"/><text x="12" y="8" font-family="Liberation Sans" font-weight="bold" font-style="italic" font-size="22" fill="#fff" stroke="#fff" stroke-width="1.6" textLength="162" lengthAdjust="spacingAndGlyphs">MEGAPROGRAMS</text></g><g transform="translate(87.2,238.8) rotate(-30)"><rect x="0" y="-13.5" width="187" height="27" rx="6" fill="rgb(236,236,240)"/><text x="12" y="8" font-family="Liberation Sans" font-weight="bold" font-style="italic" font-size="22" fill="#fff" stroke="#fff" stroke-width="1.6" textLength="162" lengthAdjust="spacingAndGlyphs">MEGAPROGRAMS</text></g><g transform="translate(402.2,44.2) rotate(-30)"><rect x="0" y="-13.5" width="187" height="27" rx="6" fill="rgb(236,236,240)"/><text x="12" y="8" font-family="Liberation Sans" font-weight="bold" font-style="italic" font-size="22" fill="#fff" stroke="#fff" stroke-width="1.6" textLength="162" lengthAdjust="spacingAndGlyphs">MEGAPROGRAMS</text></g><g transform="translate(717.2,-150.2) rotate(-30)"><rect x="0" y="-13.5" width="187" height="27" rx="6" fill="rgb(236,236,240)"/><text x="12" y="8" font-family="Liberation Sans" font-weight="bold" font-style="italic" font-size="22" fill="#fff" stroke="#fff" stroke-width="1.6" textLength="162" lengthAdjust="spacingAndGlyphs">MEGAPROGRAMS</text></g><line x1="-1192.7" y1="1217.5" x2="-247.7" y2="634.0" stroke="rgb(230,230,235)" stroke-width="1.4"/><line x1="-85.8" y1="540.5" x2="67.3" y2="439.5" stroke="rgb(230,230,235)" stroke-width="1.4"/><line x1="229.2" y1="346.0" x2="382.3" y2="245.0" stroke="rgb(230,230,235)" stroke-width="1.4"/><line x1="544.2" y1="151.5" x2="697.3" y2="50.5" stroke="rgb(230,230,235)" stroke-width="1.4"/><line x1="859.2" y1="-43.0" x2="1012.3" y2="-144.0" stroke="rgb(230,230,235)" stroke-width="1.4"/><line x1="1174.2" y1="-237.5" x2="2119.2" y2="-821.0" stroke="rgb(230,230,235)" stroke-width="1.4"/><g transform="translate(-247.7,634.0) rotate(-30)"><rect x="0" y="-13.5" width="187" height="27" rx="6" fill="rgb(236,236,240)"/><text x="12" y="8" font-family="Liberation Sans" font-weight="bold" font-style="italic" font-size="22" fill="#fff" stroke="#fff" stroke-width="1.6" textLength="162" lengthAdjust="spacingAndGlyphs">MEGAPROGRAMS</text></g><g transform="translate(67.3,439.5) rotate(-30)"><rect x="0" y="-13.5" width="187" height="27" rx="6" fill="rgb(236,236,240)"/><text x="12" y="8" font-family="Liberation Sans" font-weight="bold" font-style="italic" font-size="22" fill="#fff" stroke="#fff" stroke-width="1.6" textLength="162" lengthAdjust="spacingAndGlyphs">MEGAPROGRAMS</text></g><g transform="translate(382.3,245.0) rotate(-30)"><rect x="0" y="-13.5" width="187" height="27" rx="6" fill="rgb(236,236,240)"/><text x="12" y="8" font-family="Liberation Sans" font-weight="bold" font-style="italic" font-size="22" fill="#fff" stroke="#fff" stroke-width="1.6" textLength="162" lengthAdjust="spacingAndGlyphs">MEGAPROGRAMS</text></g><g transform="translate(697.3,50.5) rotate(-30)"><rect x="0" y="-13.5" width="187" height="27" rx="6" fill="rgb(236,236,240)"/><text x="12" y="8" font-family="Liberation Sans" font-weight="bold" font-style="italic" font-size="22" fill="#fff" stroke="#fff" stroke-width="1.6" textLength="162" lengthAdjust="spacingAndGlyphs">MEGAPROGRAMS</text></g><g transform="translate(1012.3,-144.0) rotate(-30)"><rect x="0" y="-13.5" width="187" height="27" rx="6" fill="rgb(236,236,240)"/><text x="12" y="8" font-family="Liberation Sans" font-weight="bold" font-style="italic" font-size="22" fill="#fff" stroke="#fff" stroke-width="1.6" textLength="162" lengthAdjust="spacingAndGlyphs">MEGAPROGRAMS</text></g><line x1="-1203.0" y1="1427.8" x2="-258.0" y2="844.2" stroke="rgb(230,230,235)" stroke-width="1.4"/><line x1="-96.1" y1="750.8" x2="57.0" y2="649.8" stroke="rgb(230,230,235)" stroke-width="1.4"/><line x1="218.9" y1="556.2" x2="372.0" y2="455.2" stroke="rgb(230,230,235)" stroke-width="1.4"/><line x1="533.9" y1="361.8" x2="687.0" y2="260.8" stroke="rgb(230,230,235)" stroke-width="1.4"/><line x1="848.9" y1="167.2" x2="1002.0" y2="66.2" stroke="rgb(230,230,235)" stroke-width="1.4"/><line x1="1163.9" y1="-27.2" x2="1317.0" y2="-128.2" stroke="rgb(230,230,235)" stroke-width="1.4"/><line x1="1478.9" y1="-221.8" x2="2423.9" y2="-805.2" stroke="rgb(230,230,235)" stroke-width="1.4"/><g transform="translate(-258.0,844.2) rotate(-30)"><rect x="0" y="-13.5" width="187" height="27" rx="6" fill="rgb(236,236,240)"/><text x="12" y="8" font-family="Liberation Sans" font-weight="bold" font-style="italic" font-size="22" fill="#fff" stroke="#fff" stroke-width="1.6" textLength="162" lengthAdjust="spacingAndGlyphs">MEGAPROGRAMS</text></g><g transform="translate(57.0,649.8) rotate(-30)"><rect x="0" y="-13.5" width="187" height="27" rx="6" fill="rgb(236,236,240)"/><text x="12" y="8" font-family="Liberation Sans" font-weight="bold" font-style="italic" font-size="22" fill="#fff" stroke="#fff" stroke-width="1.6" textLength="162" lengthAdjust="spacingAndGlyphs">MEGAPROGRAMS</text></g><g transform="translate(372.0,455.2) rotate(-30)"><rect x="0" y="-13.5" width="187" height="27" rx="6" fill="rgb(236,236,240)"/><text x="12" y="8" font-family="Liberation Sans" font-weight="bold" font-style="italic" font-size="22" fill="#fff" stroke="#fff" stroke-width="1.6" textLength="162" lengthAdjust="spacingAndGlyphs">MEGAPROGRAMS</text></g><g transform="translate(687.0,260.8) rotate(-30)"><rect x="0" y="-13.5" width="187" height="27" rx="6" fill="rgb(236,236,240)"/><text x="12" y="8" font-family="Liberation Sans" font-weight="bold" font-style="italic" font-size="22" fill="#fff" stroke="#fff" stroke-width="1.6" textLength="162" lengthAdjust="spacingAndGlyphs">MEGAPROGRAMS</text></g><g transform="translate(1002.0,66.2) rotate(-30)"><rect x="0" y="-13.5" width="187" height="27" rx="6" fill="rgb(236,236,240)"/><text x="12" y="8" font-family="Liberation Sans" font-weight="bold" font-style="italic" font-size="22" fill="#fff" stroke="#fff" stroke-width="1.6" textLength="162" lengthAdjust="spacingAndGlyphs">MEGAPROGRAMS</text></g><g transform="translate(1317.0,-128.2) rotate(-30)"><rect x="0" y="-13.5" width="187" height="27" rx="6" fill="rgb(236,236,240)"/><text x="12" y="8" font-family="Liberation Sans" font-weight="bold" font-style="italic" font-size="22" fill="#fff" stroke="#fff" stroke-width="1.6" textLength="162" lengthAdjust="spacingAndGlyphs">MEGAPROGRAMS</text></g><line x1="-977.5" y1="1482.8" x2="-32.5" y2="899.2" stroke="rgb(230,230,235)" stroke-width="1.4"/><line x1="129.4" y1="805.8" x2="282.5" y2="704.8" stroke="rgb(230,230,235)" stroke-width="1.4"/><line x1="444.4" y1="611.2" x2="597.5" y2="510.2" stroke="rgb(230,230,235)" stroke-width="1.4"/><line x1="759.4" y1="416.8" x2="912.5" y2="315.8" stroke="rgb(230,230,235)" stroke-width="1.4"/><line x1="1074.4" y1="222.2" x2="1227.5" y2="121.2" stroke="rgb(230,230,235)" stroke-width="1.4"/><line x1="1389.4" y1="27.8" x2="1542.5" y2="-73.2" stroke="rgb(230,230,235)" stroke-width="1.4"/><line x1="1704.4" y1="-166.8" x2="2649.4" y2="-750.2" stroke="rgb(230,230,235)" stroke-width="1.4"/><g transform="translate(-32.5,899.2) rotate(-30)"><rect x="0" y="-13.5" width="187" height="27" rx="6" fill="rgb(236,236,240)"/><text x="12" y="8" font-family="Liberation Sans" font-weight="bold" font-style="italic" font-size="22" fill="#fff" stroke="#fff" stroke-width="1.6" textLength="162" lengthAdjust="spacingAndGlyphs">MEGAPROGRAMS</text></g><g transform="translate(282.5,704.8) rotate(-30)"><rect x="0" y="-13.5" width="187" height="27" rx="6" fill="rgb(236,236,240)"/><text x="12" y="8" font-family="Liberation Sans" font-weight="bold" font-style="italic" font-size="22" fill="#fff" stroke="#fff" stroke-width="1.6" textLength="162" lengthAdjust="spacingAndGlyphs">MEGAPROGRAMS</text></g><g transform="translate(597.5,510.2) rotate(-30)"><rect x="0" y="-13.5" width="187" height="27" rx="6" fill="rgb(236,236,240)"/><text x="12" y="8" font-family="Liberation Sans" font-weight="bold" font-style="italic" font-size="22" fill="#fff" stroke="#fff" stroke-width="1.6" textLength="162" lengthAdjust="spacingAndGlyphs">MEGAPROGRAMS</text></g><g transform="translate(912.5,315.8) rotate(-30)"><rect x="0" y="-13.5" width="187" height="27" rx="6" fill="rgb(236,236,240)"/><text x="12" y="8" font-family="Liberation Sans" font-weight="bold" font-style="italic" font-size="22" fill="#fff" stroke="#fff" stroke-width="1.6" textLength="162" lengthAdjust="spacingAndGlyphs">MEGAPROGRAMS</text></g><g transform="translate(1227.5,121.2) rotate(-30)"><rect x="0" y="-13.5" width="187" height="27" rx="6" fill="rgb(236,236,240)"/><text x="12" y="8" font-family="Liberation Sans" font-weight="bold" font-style="italic" font-size="22" fill="#fff" stroke="#fff" stroke-width="1.6" textLength="162" lengthAdjust="spacingAndGlyphs">MEGAPROGRAMS</text></g><g transform="translate(1542.5,-73.2) rotate(-30)"><rect x="0" y="-13.5" width="187" height="27" rx="6" fill="rgb(236,236,240)"/><text x="12" y="8" font-family="Liberation Sans" font-weight="bold" font-style="italic" font-size="22" fill="#fff" stroke="#fff" stroke-width="1.6" textLength="162" lengthAdjust="spacingAndGlyphs">MEGAPROGRAMS</text></g><line x1="-708.3" y1="1502.2" x2="236.7" y2="918.7" stroke="rgb(230,230,235)" stroke-width="1.4"/><line x1="398.6" y1="825.2" x2="551.7" y2="724.2" stroke="rgb(230,230,235)" stroke-width="1.4"/><line x1="713.6" y1="630.7" x2="866.7" y2="529.7" stroke="rgb(230,230,235)" stroke-width="1.4"/><line x1="1028.6" y1="436.2" x2="1181.7" y2="335.2" stroke="rgb(230,230,235)" stroke-width="1.4"/><line x1="1343.6" y1="241.7" x2="1496.7" y2="140.7" stroke="rgb(230,230,235)" stroke-width="1.4"/><line x1="1658.6" y1="47.2" x2="2603.6" y2="-536.3" stroke="rgb(230,230,235)" stroke-width="1.4"/><g transform="translate(236.7,918.7) rotate(-30)"><rect x="0" y="-13.5" width="187" height="27" rx="6" fill="rgb(236,236,240)"/><text x="12" y="8" font-family="Liberation Sans" font-weight="bold" font-style="italic" font-size="22" fill="#fff" stroke="#fff" stroke-width="1.6" textLength="162" lengthAdjust="spacingAndGlyphs">MEGAPROGRAMS</text></g><g transform="translate(551.7,724.2) rotate(-30)"><rect x="0" y="-13.5" width="187" height="27" rx="6" fill="rgb(236,236,240)"/><text x="12" y="8" font-family="Liberation Sans" font-weight="bold" font-style="italic" font-size="22" fill="#fff" stroke="#fff" stroke-width="1.6" textLength="162" lengthAdjust="spacingAndGlyphs">MEGAPROGRAMS</text></g><g transform="translate(866.7,529.7) rotate(-30)"><rect x="0" y="-13.5" width="187" height="27" rx="6" fill="rgb(236,236,240)"/><text x="12" y="8" font-family="Liberation Sans" font-weight="bold" font-style="italic" font-size="22" fill="#fff" stroke="#fff" stroke-width="1.6" textLength="162" lengthAdjust="spacingAndGlyphs">MEGAPROGRAMS</text></g><g transform="translate(1181.7,335.2) rotate(-30)"><rect x="0" y="-13.5" width="187" height="27" rx="6" fill="rgb(236,236,240)"/><text x="12" y="8" font-family="Liberation Sans" font-weight="bold" font-style="italic" font-size="22" fill="#fff" stroke="#fff" stroke-width="1.6" textLength="162" lengthAdjust="spacingAndGlyphs">MEGAPROGRAMS</text></g><g transform="translate(1496.7,140.7) rotate(-30)"><rect x="0" y="-13.5" width="187" height="27" rx="6" fill="rgb(236,236,240)"/><text x="12" y="8" font-family="Liberation Sans" font-weight="bold" font-style="italic" font-size="22" fill="#fff" stroke="#fff" stroke-width="1.6" textLength="162" lengthAdjust="spacingAndGlyphs">MEGAPROGRAMS</text></g><line x1="-489.0" y1="1567.2" x2="456.0" y2="983.8" stroke="rgb(230,230,235)" stroke-width="1.4"/><line x1="617.9" y1="890.2" x2="771.0" y2="789.2" stroke="rgb(230,230,235)" stroke-width="1.4"/><line x1="932.9" y1="695.8" x2="1086.0" y2="594.8" stroke="rgb(230,230,235)" stroke-width="1.4"/><line x1="1247.9" y1="501.2" x2="1401.0" y2="400.2" stroke="rgb(230,230,235)" stroke-width="1.4"/><line x1="1562.9" y1="306.8" x2="2507.9" y2="-276.8" stroke="rgb(230,230,235)" stroke-width="1.4"/><g transform="translate(456.0,983.8) rotate(-30)"><rect x="0" y="-13.5" width="187" height="27" rx="6" fill="rgb(236,236,240)"/><text x="12" y="8" font-family="Liberation Sans" font-weight="bold" font-style="italic" font-size="22" fill="#fff" stroke="#fff" stroke-width="1.6" textLength="162" lengthAdjust="spacingAndGlyphs">MEGAPROGRAMS</text></g><g transform="translate(771.0,789.2) rotate(-30)"><rect x="0" y="-13.5" width="187" height="27" rx="6" fill="rgb(236,236,240)"/><text x="12" y="8" font-family="Liberation Sans" font-weight="bold" font-style="italic" font-size="22" fill="#fff" stroke="#fff" stroke-width="1.6" textLength="162" lengthAdjust="spacingAndGlyphs">MEGAPROGRAMS</text></g><g transform="translate(1086.0,594.8) rotate(-30)"><rect x="0" y="-13.5" width="187" height="27" rx="6" fill="rgb(236,236,240)"/><text x="12" y="8" font-family="Liberation Sans" font-weight="bold" font-style="italic" font-size="22" fill="#fff" stroke="#fff" stroke-width="1.6" textLength="162" lengthAdjust="spacingAndGlyphs">MEGAPROGRAMS</text></g><g transform="translate(1401.0,400.2) rotate(-30)"><rect x="0" y="-13.5" width="187" height="27" rx="6" fill="rgb(236,236,240)"/><text x="12" y="8" font-family="Liberation Sans" font-weight="bold" font-style="italic" font-size="22" fill="#fff" stroke="#fff" stroke-width="1.6" textLength="162" lengthAdjust="spacingAndGlyphs">MEGAPROGRAMS</text></g><line x1="-113.5" y1="1594.0" x2="831.5" y2="1010.5" stroke="rgb(230,230,235)" stroke-width="1.4"/><line x1="993.4" y1="917.0" x2="1146.5" y2="816.0" stroke="rgb(230,230,235)" stroke-width="1.4"/><line x1="1308.4" y1="722.5" x2="1461.5" y2="621.5" stroke="rgb(230,230,235)" stroke-width="1.4"/><line x1="1623.4" y1="528.0" x2="2568.4" y2="-55.5" stroke="rgb(230,230,235)" stroke-width="1.4"/><g transform="translate(831.5,1010.5) rotate(-30)"><rect x="0" y="-13.5" width="187" height="27" rx="6" fill="rgb(236,236,240)"/><text x="12" y="8" font-family="Liberation Sans" font-weight="bold" font-style="italic" font-size="22" fill="#fff" stroke="#fff" stroke-width="1.6" textLength="162" lengthAdjust="spacingAndGlyphs">MEGAPROGRAMS</text></g><g transform="translate(1146.5,816.0) rotate(-30)"><rect x="0" y="-13.5" width="187" height="27" rx="6" fill="rgb(236,236,240)"/><text x="12" y="8" font-family="Liberation Sans" font-weight="bold" font-style="italic" font-size="22" fill="#fff" stroke="#fff" stroke-width="1.6" textLength="162" lengthAdjust="spacingAndGlyphs">MEGAPROGRAMS</text></g><g transform="translate(1461.5,621.5) rotate(-30)"><rect x="0" y="-13.5" width="187" height="27" rx="6" fill="rgb(236,236,240)"/><text x="12" y="8" font-family="Liberation Sans" font-weight="bold" font-style="italic" font-size="22" fill="#fff" stroke="#fff" stroke-width="1.6" textLength="162" lengthAdjust="spacingAndGlyphs">MEGAPROGRAMS</text></g></svg>
</body></html>
